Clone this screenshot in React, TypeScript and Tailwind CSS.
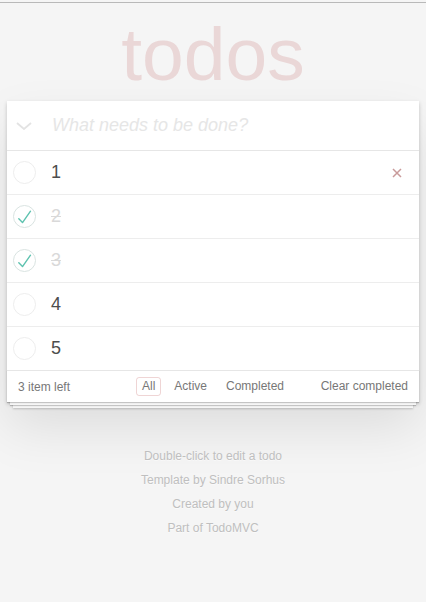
type todo = {
    title: string,
    done: boolean
}

const todos: todo[] = [
    { title: "1", done: false },
    { title: "2", done: true },
    { title: "3", done: true },
    { title: "4", done: false },
    { title: "5", done: false }
]

function Toggle({ done }: { done: boolean }) {
    return (
        <svg width="23" height="23" viewBox="0 0 23 23" className="shrink-0">
            <circle cx="11.5" cy="11.5" r="11" fill="none" stroke={done ? "#d9e3e1" : "#ededed"} strokeWidth="1" />
            {done && (
                <polyline points="5.8,13.8 9.5,17.6 17.5,6.2" fill="none" stroke="#5dc2af" strokeWidth="1.4" strokeLinecap="round" strokeLinejoin="round" />
            )}
        </svg>
    )
}

export default function App() {
    return (
        <div className="min-h-screen bg-[#f5f5f5] font-['Liberation_Sans',Arial,sans-serif] text-[#4d4d4d]">
            <div className="h-[3px] border-b border-[#b9b9b9]" />

            <h1 className="mt-[14px] text-center text-[75px] leading-none font-normal text-[rgba(175,47,47,0.15)]">todos</h1>

            <section className="mx-[7px] mt-[9px] bg-white shadow-[0_2px_4px_0_rgba(0,0,0,0.2),0_25px_50px_0_rgba(0,0,0,0.1)]">
                <header className="flex h-[49px] items-center">
                    <div className="flex w-[34px] justify-center">
                        <svg width="16" height="8" viewBox="0 0 16 8">
                            <polyline points="1,1 8,7 15,1" fill="none" stroke="#e3e3e3" strokeWidth="1.8" />
                        </svg>
                    </div>
                    <span className="ml-[11px] text-[18px] italic text-[#e6e6e6]">What needs to be done?</span>
                </header>

                <ul className="border-t border-[#e6e6e6]">
                    {
                        todos.map((t, index) => {
                            return (
                                <li key={index} className="flex h-[44px] items-center border-b border-[#ededed] pl-[6px] pr-[17px] last:border-b-0 last:h-[43px]">
                                    <Toggle done={t.done} />
                                    <span className={t.done ? "ml-[15px] flex-1 text-[18px] text-[#d9d9d9] line-through" : "ml-[15px] flex-1 text-[18px] text-[#4d4d4d]"}>{t.title}</span>
                                    {index === 0 && (
                                        <svg width="10" height="10" viewBox="0 0 10 10">
                                            <path d="M1 1L9 9M9 1L1 9" stroke="#c99b9b" strokeWidth="1.5" />
                                        </svg>
                                    )}
                                </li>
                            )
                        })
                    }
                </ul>

                <footer className="grid h-[32px] grid-cols-[1fr_auto_1fr] items-center border-t border-[#e6e6e6] px-[11px] text-[12px] text-[#777] shadow-[0_1px_1px_rgba(0,0,0,0.2),0_6px_0_-3px_#f6f6f6,0_7px_1px_-3px_rgba(0,0,0,0.2),0_12px_0_-6px_#f6f6f6,0_13px_2px_-6px_rgba(0,0,0,0.2)]">
                    <span>3 item left</span>
                    <div className="flex gap-[7px]">
                        <span className="rounded-[3px] border border-[rgba(175,47,47,0.2)] px-[5px] py-[2px] leading-[13px]">All</span>
                        <span className="rounded-[3px] border border-transparent px-[5px] py-[2px] leading-[13px]">Active</span>
                        <span className="rounded-[3px] border border-transparent px-[5px] py-[2px] leading-[13px]">Completed</span>
                    </div>
                    <span className="justify-self-end -mt-[2px]">Clear completed</span>
                </footer>
            </section>

            <footer className="mt-[42px] text-center text-[12px] leading-[24px] text-[#bfbfbf] [text-shadow:0_1px_0_rgba(255,255,255,0.5)]">
                <p>Double-click to edit a todo</p>
                <p>Template by Sindre Sorhus</p>
                <p>Created by you</p>
                <p>Part of TodoMVC</p>
            </footer>
        </div>
    )
}
